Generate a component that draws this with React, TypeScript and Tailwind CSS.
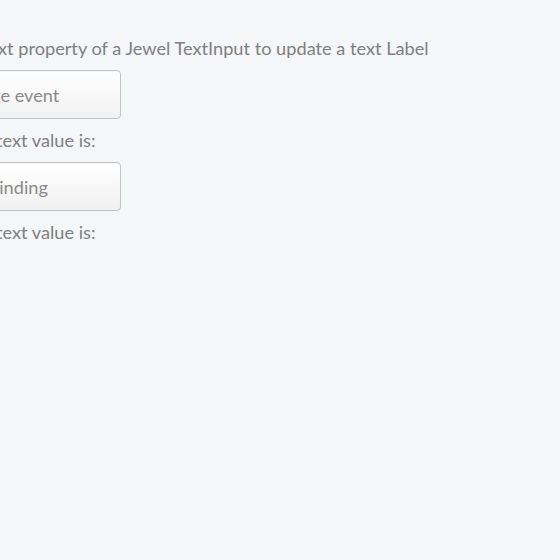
const inputClass =
  "h-[49px] rounded-[4px] border border-[#c4c4c4] bg-gradient-to-b from-white to-[#f1f1f1] px-[14px] text-[18.2px] text-[#808080] placeholder-[#8a8a8a] shadow-[inset_0_1px_1px_rgba(0,0,0,0.04)]";

export default function App() {
  return (
    <div className="min-h-[560px] w-[560px] overflow-hidden bg-[#f5f6f8] font-['Lato',sans-serif] text-[18.2px] text-[#808080]">
      <div className="flex flex-col items-start pt-[36px]">
        <p className="ml-[-84px] whitespace-nowrap leading-[24px]">
          Use the text property of a Jewel TextInput to update a text Label
        </p>
        <input className={`${inputClass} ml-[-97px] mt-[10px] w-[218px]`} placeholder="Use change event" />
        <p className="ml-[-39px] mt-[9px] whitespace-nowrap leading-[24px]">The text value is:</p>
        <input className={`${inputClass} ml-[-61px] mt-[10px] w-[182px]`} placeholder="Use binding" />
        <p className="ml-[-39px] mt-[9px] whitespace-nowrap leading-[24px]">The text value is:</p>
      </div>
    </div>
  );
}
